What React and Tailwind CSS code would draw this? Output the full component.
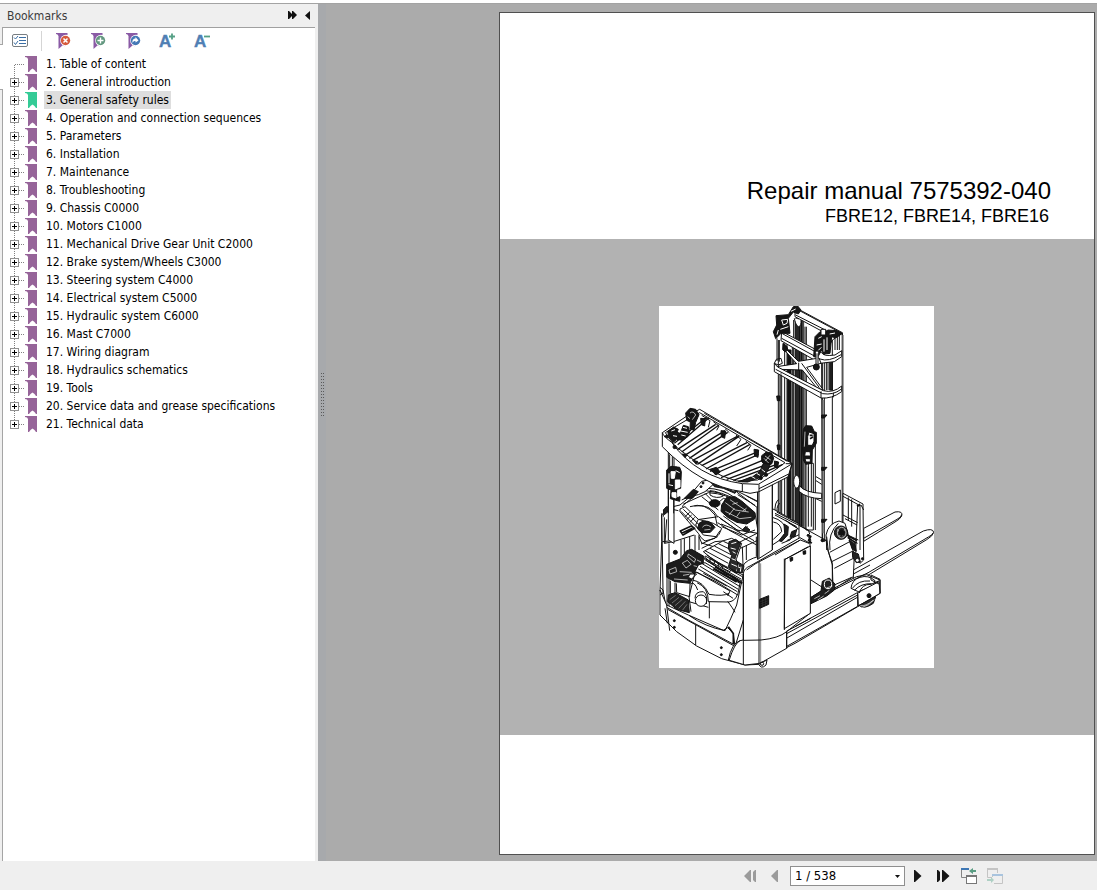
import React from "react";

const bookmarks = [
  "1. Table of content",
  "2. General introduction",
  "3. General safety rules",
  "4. Operation and connection sequences",
  "5. Parameters",
  "6. Installation",
  "7. Maintenance",
  "8. Troubleshooting",
  "9. Chassis C0000",
  "10. Motors C1000",
  "11. Mechanical Drive Gear Unit C2000",
  "12. Brake system/Wheels C3000",
  "13. Steering system C4000",
  "14. Electrical system C5000",
  "15. Hydraulic system C6000",
  "16. Mast C7000",
  "17. Wiring diagram",
  "18. Hydraulics schematics",
  "19. Tools",
  "20. Service data and grease specifications",
  "21. Technical data",
];

function Ribbon({ selected }) {
  return (
    <svg width="12" height="16" viewBox="0 0 12 16" className="shrink-0" aria-hidden="true">
      <path
        d="M0 0H12V16H11L9.5 14L7.5 12.5L5.5 14L4 16H3V3L2 1.5L0 1Z"
        fill={selected ? "#34cb96" : "#966499"}
      />
    </svg>
  );
}

function BookmarkRow({ label, index, last }) {
  const selected = index === 2;
  return (
    <li className="flex h-[18px] items-center">
      <span className="flex h-[18px] w-[22px] shrink-0">
        {index === 0 ? (
          <svg width="22" height="18" viewBox="0 0 22 18" aria-hidden="true" shapeRendering="crispEdges">
            <path d="M11.5 9.5H22M11.5 9.5V18" stroke="#808080" strokeDasharray="1 1" fill="none" />
          </svg>
        ) : (
          <button type="button" aria-label={`Expand ${label}`} className="block">
            <svg width="22" height="18" viewBox="0 0 22 18" shapeRendering="crispEdges">
              <path
                d={last ? "M11.5 0V5M16 9.5H22" : "M11.5 0V5M11.5 14V18M16 9.5H22"}
                stroke="#808080"
                strokeDasharray="1 1"
                fill="none"
              />
              <rect x="7.5" y="5.5" width="8" height="8" fill="#fff" stroke="#919191" />
              <path d="M9 9.5H14M11.5 7V12" stroke="#000" />
            </svg>
          </button>
        )}
      </span>
      <Ribbon selected={selected} />
      <a
        href="#page"
        aria-current={selected ? "true" : undefined}
        className={
          selected
            ? "ml-[7px] bg-[#dedede] px-[2px] leading-[18px] whitespace-nowrap"
            : "ml-[7px] px-[2px] leading-[18px] whitespace-nowrap"
        }
      >
        {label}
      </a>
    </li>
  );
}

function BadgeIcon({ color, children }) {
  return (
    <svg width="19" height="18" viewBox="0 0 19 18" aria-hidden="true">
      <path d="M1 1H12.5V17L8 13L3.500 17V4L2.500 2.500L1 2Z" fill="#8a5aa5" />
      <circle cx="11" cy="8.500" r="5.800" fill="#fff" />
      <path d="M9 13H14V18H10Z" fill="#fff" />
      <circle cx="10.500" cy="8.500" r="4.700" fill={color} />
      {children}
    </svg>
  );
}

function ToolButton({ label, children }) {
  return (
    <button type="button" aria-label={label} className="flex h-[18px] w-[19px] items-center">
      {children}
    </button>
  );
}

function Toolbar() {
  return (
    <div className="flex h-[27px] items-center pb-[2px] pl-[9px]">
      <ToolButton label="Options">
        <svg width="17" height="14" viewBox="0 0 17 14" aria-hidden="true">
          <rect x="0.5" y="0.5" width="15" height="12" rx="1.5" fill="#fff" stroke="#777d82" />
          <path d="M2 3.5L3.5 5L6 2M2 8.5L3.5 10.5L6 7" stroke="#3a6ea5" fill="none" />
          <path d="M7 3.5H14M7 6.5H14M7 9.5H14" stroke="#3a6ea5" />
        </svg>
      </ToolButton>
      <span className="ml-[10px] h-5 w-px bg-[#d5d5d5]" />
      <div className="ml-[13px] flex gap-4">
        <ToolButton label="Delete bookmark">
          <BadgeIcon color="#d65a3c">
            <path d="M8.5 6.5L12.5 10.5M12.5 6.5L8.5 10.5" stroke="#fff" strokeWidth="1.5" />
          </BadgeIcon>
        </ToolButton>
        <ToolButton label="Add bookmark">
          <BadgeIcon color="#62977f">
            <path d="M10.5 5.5V11.5M7.5 8.5H13.5" stroke="#fff" strokeWidth="1.4" />
          </BadgeIcon>
        </ToolButton>
        <ToolButton label="Go to bookmark">
          <BadgeIcon color="#4478b6">
            <path d="M7.5 11C7 7.500 9 6.500 10.500 6.500V5L13.500 8.500L10.500 10.500V9C9 9 8 9.500 7.500 11Z" fill="#fff" />
          </BadgeIcon>
        </ToolButton>
        <ToolButton label="Increase text size">
          <svg width="19" height="18" viewBox="0 0 19 18" className="overflow-visible" aria-hidden="true">
            <text x="-1" y="15" fontFamily="Liberation Sans, Arial, sans-serif" fontSize="17" fontWeight="700" fill="#507fb4" stroke="#507fb4" strokeWidth="0.400">A</text>
            <path d="M12 1.5V7.5M9 4.5H15" stroke="#55a085" strokeWidth="1.8" />
          </svg>
        </ToolButton>
        <ToolButton label="Decrease text size">
          <svg width="19" height="18" viewBox="0 0 19 18" className="overflow-visible" aria-hidden="true">
            <text x="-1" y="15" fontFamily="Liberation Sans, Arial, sans-serif" fontSize="17" fontWeight="700" fill="#507fb4" stroke="#507fb4" strokeWidth="0.400">A</text>
            <path d="M9 4.5H15" stroke="#55a085" strokeWidth="1.8" />
          </svg>
        </ToolButton>
      </div>
    </div>
  );
}

function Mast() {
  return (
    <g transform="translate(300 0)">
      {/* channel profiles */}
      <path d="M73 170V650L200 720V290L150 250V60L118 25L75 60Z" fill="#fff" stroke="none" />
      <path d="M70 120V640M75 200V645M80 215V645M89 130V645M96 130V650" />
      <path d="M98 150H108V655H98Z" fill="#111" />
      <path d="M112 140V660M116 60V665" />
      <path d="M120 55H146V680L120 668Z" fill="#555" strokeWidth="2" />
      <path d="M123 60V672M129 60V674M134 60V676M140 60V678" strokeWidth="4" />
      <path d="M150 80V685M154 80V685" />
      <path d="M76 220V645" stroke="#777" strokeWidth="6" />
      {/* head beam */}
      <path d="M120 22L262 98V120L235 112L120 50Z" fill="#fff" />
      <path d="M130 30L255 97M122 45L215 92" />
      <path d="M118 55C125 90 140 85 138 60" fill="#fff" />
      {/* front column */}
      <path d="M200 180L232 120L262 100V705L202 725Z" fill="#fff" />
      <path d="M202 180V720M208 180V725M214 180V270M219 175V270M232 120V690M262 100V700" />
      <path d="M224 175H232V270H224Z" fill="#222" />
      <path d="M205 300V700" stroke="#888" strokeWidth="5" />
      <path d="M264 105V680" stroke="#777" strokeWidth="4" />
      <path d="M240 110V150M247 105V150M253 100V150" />
      {/* upper and lower cross members */}
      <path d="M80 94L200 158Q205 170 240 165L260 152V170L238 185L195 190L78 122Z" fill="#fff" />
      <path d="M82 101L190 160M80 115L195 177Q220 187 258 164" />
      <path d="M94 148L130 184L192 174L198 190L155 202L205 270L185 263L142 210L75 208L65 200L125 191L90 152Z" fill="#fff" />
      <path d="M58 190L68 201L205 272Q235 280 260 258V275Q230 297 198 294L58 215Z" fill="#fff" />
      <path d="M62 208L203 281Q235 286 258 268M198 274V294M235 278V292" />
      <path d="M131 188V212M140 190L193 263" />
      {/* chain heads */}
      <path d="M115 20L128 18L138 30L130 42L115 36L100 55L105 100L78 100L62 116L55 95L65 75L63 47L100 44Z" fill="#151515" />
      <path d="M80 60L98 58L96 70L85 75ZM76 88L100 80M70 90L66 104M108 34L122 27" stroke="#fff" />
      <path d="M180 110L195 95L210 100L218 90L245 92L262 100L245 112L230 110L225 160L205 162L200 150L188 172L176 170Z" fill="#151515" />
      <path d="M190 115L200 110M185 135L200 132M207 118V155M216 112V150M224 102L240 99M190 151L199 142" stroke="#fff" />
      <path d="M198 88H212V105H198Z" fill="#fff" />
      <path d="M186 155V198" stroke="#fff" strokeWidth="7" />
      <path d="M183 160V195M189 160V195" />
      <circle cx="184" cy="201" r="9" fill="#151515" />
      <path d="M84 130L95 138L99 150L90 156L83 149Z" fill="#151515" />
      <path d="M66 115V183M73 120V185M58 190L64 178L78 175L82 190L70 195Z" />
      {/* lift cylinder */}
      <path d="M153 490V690H175V490Z" fill="#fff" />
      <path d="M160 490V680M169 490V680M181 400V690" />
      <path d="M145 388L152 377L170 378L178 395L184 397V430L172 450L171 490L152 493L145 480L142 440Z" fill="#151515" />
      <path d="M162 396L177 401V424L172 436H158V410ZM151 455H165L167 468H149ZM150 476H166V486H153Z" fill="#fff" />
      <path d="M164 406H173M165 416L174 411" strokeWidth="5" />
      <path d="M150 395L148 440" stroke="#fff" strokeWidth="2" />
      {/* hoses and brackets */}
      <path d="M65 288H75V302H67ZM66 435H75V449H68ZM200 345H216L208 354H200ZM200 502H216L208 511H200ZM200 658H216L208 667H200Z" fill="#151515" />
      <ellipse cx="125" cy="545" rx="9" ry="19" fill="#fff" />
      <path d="M133 557Q150 578 200 580V596Q155 595 132 574Z" fill="#fff" />
      <path d="M183 530L200 540M183 542L200 553M183 596L200 604" />
      <path d="M60 640Q58 605 72 598M66 635Q65 615 75 610" />
      <path d="M240 578L256 570V604L240 612Z" fill="#fff" />
      <path d="M78 218V640M160 500V590" strokeWidth="2" />
    </g>
  );
}

function Forks() {
  return (
    <g transform="translate(420 540)">
      {/* load backrest */}
      <path d="M144 40L204 72L206 240L195 250L180 230L160 210L144 160Z" fill="#fff" />
      <path d="M144 49L190 74M160 52V120M170 58V140M188 76L182 215M195 76V210M144 105L188 128M150 116L186 135M158 165L190 180M163 176L188 190M198 75L206 90" />
      <path d="M186 78L196 74" strokeWidth="7" />
      {/* forks */}
      <path d="M206 145L300 96Q325 92 320 108Q315 118 300 126L206 184Z" fill="#fff" />
      <path d="M206 175L306 118Q320 111 320 104" />
      <path d="M175 270L385 153Q414 143 416 157Q414 168 395 179L222 284L175 305Z" fill="#fff" />
      <path d="M218 279L400 171Q413 165 415 158M175 282L225 255M190 292L222 277" />
      {/* mast foot with lift wheel */}
      <path d="M95 200L93 165Q100 130 132 123L150 130L160 165L178 225L175 290L112 330V250Z" fill="#fff" />
      <path d="M95 170L100 215L112 255L114 325M105 210Q98 160 130 130M104 217L166 184M110 245L172 214M118 265L175 235" />
      <circle cx="138" cy="158" r="20" fill="#2a2a2a" />
      <ellipse cx="140" cy="158" rx="13" ry="16" stroke="#fff" strokeWidth="2" fill="none" />
      <path d="M127 148L145 170M150 148L132 170" stroke="#fff" strokeWidth="2" />
      <circle cx="140" cy="158" r="8" fill="#111" />
      <path d="M155 165L186 182M158 172L184 190" strokeWidth="5" />
      <path d="M162 180L180 192L184 214L172 208Z" fill="#191919" />
      <path d="M172 214L190 222L196 246L184 248L173 232Z" fill="#222" />
      <circle cx="187" cy="241" r="6" fill="#fff" />
      <circle cx="202" cy="236" r="3" fill="#111" />
    </g>
  );
}

function SupportLeg() {
  return (
    <g transform="translate(420 540)">
      <path d="M-62 415L48 360L185 290L215 284L255 300V340L188 380L0 490L-108 545Z" fill="#fff" />
      <path d="M0 440L187 338M-25 461L186 346M-100 505L-25 461M-90 512L187 352M-110 547L188 379" />
      <path d="M48 368L120 328L205 285M48 352L88 328L170 292M58 360L130 322" />
      {/* load wheel */}
      <path d="M168 325Q170 300 195 292Q220 284 240 302L235 318L190 335Z" fill="#fff" />
      <path d="M172 325Q190 300 225 303M178 331Q198 310 230 311" />
      <path d="M188 338L252 305L255 340L190 378Z" fill="#fff" />
      <path d="M192 376Q206 390 235 370L242 350L190 377Z" fill="#2a2a2a" />
      <path d="M196 377Q212 380 234 361M202 382Q220 378 238 359" stroke="#fff" strokeWidth="2" />
      <path d="M228 285L255 298V340M228 286V300L252 312M188 338V378M193 339Q200 312 228 313L253 302" />
      <circle cx="222" cy="347" r="6" fill="#111" />
      {/* drive axle */}
      <path d="M47 353L78 333L82 304L103 294L120 312L118 330L95 348L48 371Z" fill="#202020" />
      <path d="M58 356L75 347M68 360L86 348M89 341L103 331M94 324L112 318" stroke="#fff" strokeWidth="2" />
      <ellipse cx="99" cy="313" rx="11" ry="13" fill="none" stroke="#fff" />
      <path d="M48 300L82 322M78 322L96 334" />
    </g>
  );
}

function Interior() {
  return (
    <g transform="translate(0 540)">
      {/* shell behind the operator */}
      <path d="M20 185V105L45 82L75 75L160 5L250 35L360 90L432 130V250L265 420L240 500L150 480L35 400L15 330Z" fill="#fff" />
      <path d="M25 110Q22 88 42 86L70 92M28 112V190L55 185L118 165M35 118L30 190M20 100L24 330L35 390M42 190V390M78 180V250M88 175V245M104 170V230M120 165V220M132 165V210M22 185L52 182" />
      <path d="M25 90L34 80L48 82L40 94L28 104Z" fill="#222" />
      {/* back cushion and armrest */}
      <path d="M82 78L140 30L200 40L250 60L300 100L310 160L245 150L190 110L120 120Z" fill="#fff" />
      <path d="M80 60L155 25Q200 25 238 52M85 72L160 38Q220 42 246 68M105 80Q150 65 180 105L188 142M118 78Q165 70 188 110M150 40L185 75M182 75L205 55L250 72M140 50L190 90M165 32Q195 34 205 48Q185 58 165 45Z" />
      <path d="M118 30L140 4L160 0L174 14L150 35L130 44L100 50Z" fill="#fff" />
      <path d="M88 55L115 28L130 35L112 55Z" fill="#191919" />
      <circle cx="144" cy="9" r="3" fill="#111" />
      <circle cx="138" cy="20" r="3" fill="#111" />
      <path d="M168 3L210 12L248 28L240 40L205 25L178 20Z" fill="#202020" />
      <path d="M185 10L210 20M214 21L238 33" stroke="#fff" />
      <ellipse cx="179" cy="70" rx="16" ry="11" fill="#151515" />
      {/* instrument console */}
      <path d="M200 75L215 52L240 50L260 63L300 98L298 118L275 132L245 127L218 112L198 94Z" fill="#1b1b1b" />
      <path d="M211 68L241 90L281 96M225 59L273 92M211 94L254 116L289 112M245 110L255 96M222 105L238 85M232 73L248 68M263 94L275 84" stroke="#fff" strokeWidth="2" />
      <path d="M205 108L265 151L278 140M195 115L254 155M188 128L225 152L305 195M198 132L232 145L297 182M200 140L260 165L300 150" />
      <path d="M262 150L272 139L285 150L275 157Z" fill="#222" />
      <path d="M245 36L306 82V132M248 44L300 76M275 48L307 65" />
      {/* joystick rest */}
      <path d="M75 87L90 80L130 118L175 130L200 145Q195 165 180 175L150 183Q137 175 130 160L75 95Z" fill="#fff" />
      <path d="M78 94L132 149M85 88L138 140M130 118L122 135L145 165L183 170L195 152M104 97L90 110M110 105L95 119M119 112L105 127" />
      <path d="M132 130Q148 117 168 128L180 142L166 157L140 158L128 147Z" fill="#191919" />
      <path d="M142 142Q152 129 168 141M148 150L166 148" stroke="#fff" strokeWidth="2" />
      <path d="M76 153L109 138L119 145L84 165ZM80 160L112 145" strokeWidth="5" />
      <circle cx="61" cy="217" r="6" fill="#111" />
      <path d="M132 170L140 189L225 215M140 205L180 185L235 180M138 192L188 170" />
      {/* seat */}
      <path d="M145 215L205 182L230 175L260 190L245 235L225 275L210 268Z" fill="#fff" />
      <path d="M150 212L220 250M155 225L218 265M165 205L226 236M178 198L228 224M190 191L238 214M205 184L240 200M145 228L210 282L240 292M148 238L190 264M165 235V245M178 242V252M190 249V259M202 256V266" />
      <path d="M222 185L242 178L257 189L240 235L247 245L267 257L263 278L240 278L220 260L230 227L220 205Z" fill="#292929" />
      <path d="M229 191L244 187M227 204L242 208M233 215L242 220M230 236L243 241M229 252L255 263M250 254L245 275M258 260L256 275" stroke="#fff" />
      <path d="M247 190L306 160M256 205L310 180M262 200L264 255M274 196V240M304 170V230M248 245V275M264 258Q270 240 315 228" />
      {/* right side housing */}
      <path d="M352 112Q390 122 395 155L375 180L352 195M355 126Q378 130 380 155L355 178M390 120L428 145L405 180L380 190M400 128L432 148M365 96L432 132M360 105L425 140M395 182L432 164" />
      <path d="M387 132L400 140L398 165L380 185L372 182L389 160ZM410 155L425 149L420 169L405 172Z" fill="#202020" />
      {/* pedals and floor */}
      <path d="M35 253L75 237L95 212L110 208L145 228L145 250L125 270L105 310L60 305L35 292Z" fill="#1c1c1c" />
      <path d="M100 222L122 237L118 247L98 230ZM42 270L62 262L65 275L45 282ZM82 249L97 241L108 253L93 264ZM74 275L110 277M84 286L114 281M57 297L98 300M126 240L138 246M116 257L132 261" stroke="#fff" strokeWidth="2" />
      <path d="M100 292L105 282H125L110 297ZM46 302V340L60 345V308M64 310L65 338L104 350L105 312Q118 302 128 330M36 292V380" fill="#fff" />
      <path d="M40 345L60 338L100 360L103 398L65 388L38 365Z" fill="#222" />
      <path d="M44 359L62 346M51 369L72 352M60 377L82 358M71 385L91 364M83 390L96 373" stroke="#999" strokeWidth="2" />
      <path d="M130 255L150 248L255 310L248 345L185 306L120 275Z" fill="#fff" />
      <path d="M140 250L255 320M135 259L250 328M130 267L247 335M125 276L225 333L218 348M145 280L215 318M154 242L260 303M145 233L258 297M164 236L262 290M150 228L264 285" />
      <path d="M175 266L245 306M180 260L248 300M230 290L262 310" strokeWidth="6" />
      <path d="M120 278L102 350L108 395M112 300Q145 305 162 343Q205 350 222 340M126 308Q160 322 160 365L222 366Q242 362 247 343M163 365V415M102 365L160 382M218 364Q235 387 240 397M205 335L234 355" />
      <circle cx="138" cy="362" r="17" fill="#fff" />
      <path d="M120 355Q120 334 145 335Q159 345 154 372" fill="none" />
    </g>
  );
}

function Body() {
  return (
    <g transform="translate(0 540)">
      {/* front bumper */}
      <path d="M15 330V405L65 455L125 498L200 536L270 555L312 553L313 480L250 485L240 500L235 460L218 443L205 451L100 405L35 375Z" fill="#fff" />
      <path d="M35 382L100 420L236 493M38 388L105 425L238 498M35 375L44 452M30 385L37 430M122 435V496" />
      <path d="M235 460V493M220 440L236 462" strokeWidth="5" />
      <path d="M103 407Q150 440 210 452Q226 420 245 375L265 282M15 322L24 330V340L15 345" />
      <circle cx="58" cy="422" r="3" fill="#111" />
      <circle cx="58" cy="442" r="3" fill="#111" />
      <circle cx="199" cy="503" r="3" fill="#111" />
      <circle cx="199" cy="524" r="3" fill="#111" />
      {/* battery compartment */}
      <path d="M265 280Q267 265 285 258L435 173L465 190V400L395 455V505L315 550L270 555L220 540Q230 490 255 482L265 480Z" fill="#fff" />
      <path d="M265 280V555M275 270L300 252L436 180M312 245V552" />
      <path d="M317 250V552" stroke="#888" />
      <path d="M265 481L318 480Q370 475 395 455V505M255 482Q238 490 222 542" />
      <path d="M310 550Q318 570 333 555L336 540L315 550Z" fill="#fff" />
      <circle cx="321" cy="551" r="5" />
      <path d="M390 238L466 198V400L388 446Z" fill="#fff" />
      <path d="M388 236V450M394 454L467 415M390 238L460 200M408 237V244M446 215V222" />
      <path d="M405 234L413 232V241L406 244ZM444 214L452 212V222L445 223Z" fill="#111" />
      <path d="M314 358L341 347V373L314 385Z" fill="#161616" />
      <path d="M316 365L340 355M316 372L340 362M316 379L340 368M323 356V381M332 352V377" stroke="#555" strokeWidth="1" />
      <path d="M360 100L432 136L460 150L464 162L456 166L468 180L462 190L436 180L360 225M432 136L515 182L515 210" />
      <path d="M456 165L467 169L461 181L470 190" strokeWidth="6" />
      <circle cx="502" cy="181" r="4" fill="#111" />
    </g>
  );
}

function Roof() {
  return (
    <g>
      {/* rear post */}
      <path d="M40 455V720L57 730V465Z" fill="#fff" />
      <path d="M44 463V515M52 468V515M40 510V640M56 600V640M62 500L78 510" />
      <path d="M35 510L48 499L74 502L79 515L77 565L65 568V594L75 590L74 604L46 596L48 570L35 565Z" fill="#161616" />
      <path d="M48 515H61L58 535H49ZM61 540H75V561L61 567ZM51 578H63V594L51 590ZM62 512L74 518M42 520V550M41 554L54 557M69 573V587" fill="#fff" stroke="#fff" />
      {/* front post */}
      <path d="M308 570L352 547V750L308 778Z" fill="#fff" />
      <path d="M308 570V778M312 570V774M352 548V750" />
      {/* canopy */}
      <path d="M22 398L100 345L134 328L405 487L412 490L400 530L312 575L285 580L262 575Q140 560 22 440Z" fill="#fff" />
      <path d="M22 398Q26 410 50 427Q125 532 262 551L310 553L410 492M262 552V576M312 553V575" />
      <path d="M31 398L105 354L134 338L390 488L360 510L308 540L245 543Q160 520 60 438Z" />
      <path
        d="M58 430L155 352M68 434L162 353M67 449L182 373M80 456L192 375M88 467L210 392M103 475L218 397M112 482L248 408M127 493L252 409M140 497L276 428M153 507L285 433M165 514L304 457M178 522L311 463M198 533L335 476M215 538L344 490M235 541L363 494M262 545L382 494"
        strokeWidth="4"
      />
      <path d="M140 346L165 362L160 382M175 365L192 378L185 391M210 386L223 398M243 405L258 418L245 438M272 423L288 436L278 451M148 340L397 484" />
      <path d="M92 339L105 325L122 328L132 344L122 367L117 391L105 387L106 366L95 361Z" fill="#151515" />
      <path d="M105 339Q115 331 122 345L112 359M98 350L105 356" stroke="#fff" strokeWidth="2" />
      <path d="M38 394L56 381L70 388L66 397L76 400L85 376L100 380L104 395L98 410L82 421L65 418L55 427L42 412Z" fill="#171717" />
      <path d="M49 393L60 389M77 393L98 397M79 405L92 408M54 407L66 409M84 382L96 385" stroke="#fff" />
      <path d="M320 467L334 456L350 459L356 475L350 492L332 496L320 485Z" fill="#151515" />
      <path d="M330 468L347 480M345 466L331 483M327 475L341 489" stroke="#fff" strokeWidth="2" />
      <path d="M325 490L315 514L296 528L270 538L250 545L278 546L317 532L337 514L346 493Z" fill="#202020" />
      <path d="M305 520L315 526M289 529L301 536M320 508L330 516" stroke="#fff" />
      <path d="M137 355L151 356L149 378L139 374ZM198 392L212 393L209 415L199 410ZM297 448L311 450L309 472L299 468ZM358 483L371 486L367 505L359 501ZM82 462L96 463L91 473ZM115 483L128 484L124 493ZM165 508L184 502L196 516L183 525ZM28 410L36 404L40 414Z" fill="#161616" />
      <circle cx="317" cy="534" r="5" fill="#111" />
      <circle cx="333" cy="524" r="5" fill="#111" />
      <circle cx="59" cy="441" r="5" fill="#111" />
      <path d="M392 491L411 491L399 531M312 566L399 523" />
    </g>
  );
}

function TruckDrawing() {
  return (
    <svg
      role="img"
      aria-label="Reach truck line drawing"
      className="block h-[362px] w-[275px] bg-white"
      viewBox="12 18 825 1086"
      fill="none"
      stroke="#111"
      strokeWidth="3"
      strokeLinejoin="round"
    >
      <Mast />
      <Forks />
      <SupportLeg />
      <Interior />
      <Body />
      <Roof />
    </svg>
  );
}

function SidePanel() {
  return (
    <aside className="flex w-[318px] shrink-0 flex-col bg-[#efefef] pr-[3px]">
      <div className="flex h-[23px] items-center pl-[7px] text-[#3c3c3c]">
        <h2 className="flex-1">Bookmarks</h2>
        <button type="button" aria-label="Expand panel" className="mr-[8px] pb-[2px]">
          <svg width="9" height="8" viewBox="0 0 9 8" aria-hidden="true">
            <path d="M0 0H1L4 3V0H5L9 4L5 8H4V5L1 8H0Z" fill="#111" />
          </svg>
        </button>
        <button type="button" aria-label="Collapse panel" className="mr-[5px]">
          <svg width="5" height="9" viewBox="0 0 5 9" aria-hidden="true">
            <path d="M5 0V9L0 4.5Z" fill="#111" />
          </svg>
        </button>
      </div>
      <div className="flex flex-1">
        <div className="flex w-[3px] flex-col">
          <span className="h-[18px] border-r border-b border-[#a5a5a5]" />
          <span className="h-[44px] bg-white" />
          <span className="flex-1 border-t border-r border-[#a5a5a5]" />
        </div>
        <div className="flex-1 border-t border-[#a0a0a0] bg-white">
          <Toolbar />
          <ul>
            {bookmarks.map((label, i) => (
              <BookmarkRow key={label} label={label} index={i} last={i === bookmarks.length - 1} />
            ))}
          </ul>
        </div>
      </div>
    </aside>
  );
}

function Splitter() {
  return (
    <div className="flex w-[8px] shrink-0 items-center justify-center bg-[#a7a9ac]">
      <svg width="4" height="44" viewBox="0 0 4 44" className="mb-[76px]" aria-hidden="true" shapeRendering="crispEdges">
        <path d="M1.500 0V44M3.500 0V44" stroke="#5a5a5a" strokeDasharray="1 2" />
      </svg>
    </div>
  );
}

function DocumentPage() {
  return (
    <main id="page" className="mt-[8px] mr-[2px] mb-[6px] ml-[173px] flex flex-1 flex-col border border-[#505050] bg-white">
      <header className="flex h-[226px] flex-col items-end justify-end pb-[11px] font-['Liberation_Sans',Arial,sans-serif] text-black">
        <h1 className="mr-[43px] text-[24px] leading-[26px]">Repair manual 7575392-040</h1>
        <p className="mr-[45px] text-[18px] leading-[24px]">FBRE12, FBRE14, FBRE16</p>
      </header>
      <section className="flex h-[496px] justify-center bg-[#b2b2b2] pt-[67px] pr-[2px]">
        <TruckDrawing />
      </section>
    </main>
  );
}

function NavButton({ label, disabled, width, children }) {
  return (
    <button
      type="button"
      aria-label={label}
      disabled={disabled}
      className={width === "wide" ? "flex h-[18px] w-[18px] items-center" : "flex h-[18px] w-[16px] items-center"}
    >
      {children}
    </button>
  );
}

function Pager() {
  return (
    <footer className="flex h-[29px] items-center justify-end gap-2 bg-[#efefef] pt-px pr-[94px]">
      <NavButton label="First page" disabled>
        <svg width="16" height="14" viewBox="0 0 16 14" aria-hidden="true">
          <path d="M9 1V13H8L2 7L8 1ZM14 1V13H13L11 11V3L13 1Z" fill="#9b9b9b" />
        </svg>
      </NavButton>
      <NavButton label="Previous page" disabled>
        <svg width="16" height="14" viewBox="0 0 16 14" aria-hidden="true">
          <path d="M12 1V13H11L5 7L11 1Z" fill="#9b9b9b" />
        </svg>
      </NavButton>
      <span className="relative flex">
        <select
          aria-label="Page number"
          defaultValue="1"
          className="h-[20px] w-[115px] appearance-none border border-[#8f8f8f] bg-white pl-[4px] text-[13px] leading-[18px] text-black"
        >
          <option value="1">1 / 538</option>
          <option value="2">2 / 538</option>
        </select>
        <svg width="5" height="3" viewBox="0 0 5 3" className="pointer-events-none absolute top-[9px] right-[5px]" aria-hidden="true">
          <path d="M0 0H5L2.500 3Z" fill="#111" />
        </svg>
      </span>
      <NavButton label="Next page">
        <svg width="16" height="14" viewBox="0 0 16 14" aria-hidden="true">
          <path d="M1 1H2L8.500 7L2 13H1Z" fill="#161616" />
        </svg>
      </NavButton>
      <NavButton label="Last page">
        <svg width="16" height="14" viewBox="0 0 16 14" aria-hidden="true">
          <path d="M0 1H1L3 3V11L1 13H0ZM5 1H6L12.500 7L6 13H5Z" fill="#161616" />
        </svg>
      </NavButton>
      <NavButton label="Previous view">
        <svg width="16" height="16" viewBox="0 0 16 16" aria-hidden="true">
          <path d="M5 9.500H0.500V1" stroke="#858585" fill="none" />
          <path d="M0 1H8" stroke="#3f78b5" strokeWidth="2" />
          <rect x="5.500" y="7.500" width="10" height="8" fill="#fff" stroke="#777" />
          <path d="M5 8H16" stroke="#777" strokeWidth="2" />
          <path d="M8 3L12 0V2H15V4H12V6Z" fill="#5a9d83" />
        </svg>
      </NavButton>
      <NavButton label="Next view" disabled width="wide">
        <svg width="18" height="16" viewBox="0 0 18 16" aria-hidden="true">
          <path d="M12.500 5V0.500H2.500V9.500H7" stroke="#c4c4c4" fill="none" />
          <path d="M2 1H13" stroke="#c4c4c4" strokeWidth="2" />
          <path d="M7.500 9V7M17.500 7V15.500H9" stroke="#c4c4c4" fill="none" />
          <path d="M7 7H18" stroke="#a9c4de" strokeWidth="2" />
          <path d="M9 12L6 9V11H2V13H6V15Z" fill="#aed0c4" />
        </svg>
      </NavButton>
    </footer>
  );
}

export default function App() {
  return (
    <div className="flex min-h-screen flex-col bg-white pt-[3px] font-['DejaVu_Sans_Condensed','DejaVu_Sans',Tahoma,sans-serif] text-[12px] text-black">
      <div className="flex flex-1 border-t border-[#a3a3a3] bg-[#ababab]">
        <SidePanel />
        <Splitter />
        <DocumentPage />
      </div>
      <Pager />
    </div>
  );
}
